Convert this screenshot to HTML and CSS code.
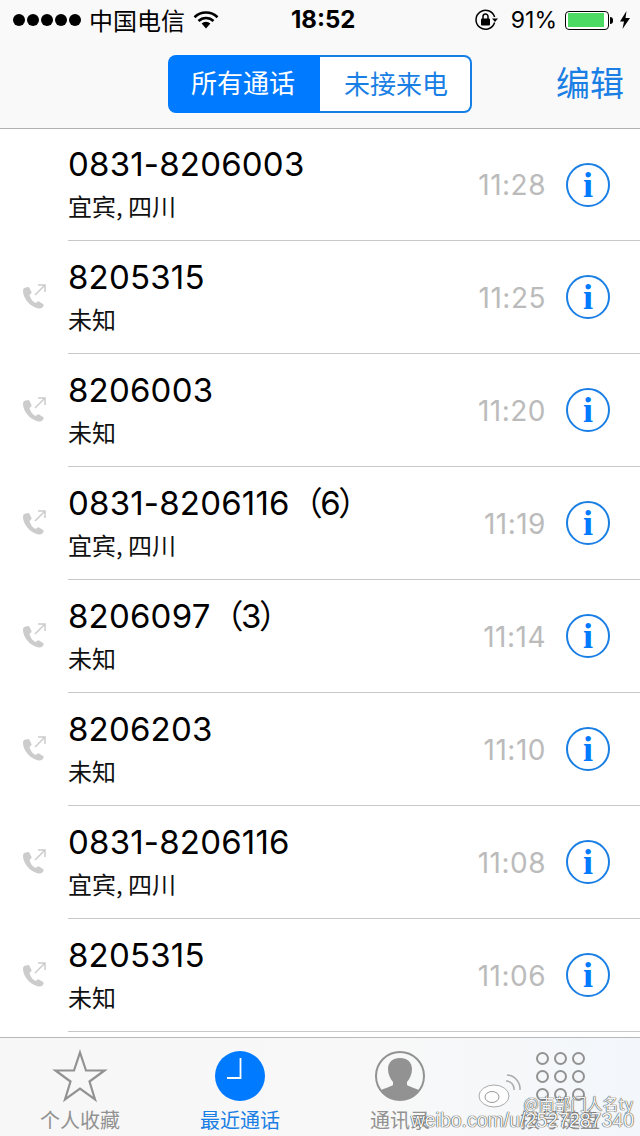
FILE: index.html
```html
<!DOCTYPE html>
<html lang="zh">
<head>
<meta charset="utf-8">
<title>最近通话</title>
<link rel="stylesheet" href="styles.css">
</head>
<body>
<div class="phone">
  <header class="top">
    <div class="status">
      <div class="status-left">
        <span class="dots"><i></i><i></i><i></i><i></i><i></i></span>
        <span class="carrier">中国电信</span>
        <svg class="wifi" width="26" height="20" viewBox="0 0 26 20"><path d="M1.500 7.200A16.500 16.500 0 0 1 24.500 7.200" fill="none" stroke="#000" stroke-width="2.600"/><path d="M5.500 11A10.800 10.800 0 0 1 20.500 11" fill="none" stroke="#000" stroke-width="2.600"/><path d="M13 18.500L8.600 13.600A6.400 6.400 0 0 1 17.400 13.600Z" fill="#000"/></svg>
      </div>
      <div class="clock">18:52</div>
      <div class="status-right">
        <svg class="lock" width="24" height="22" viewBox="0 0 24 22"><path d="M19.600 13.500A9.500 9.500 0 1 1 19.600 8" fill="none" stroke="#000" stroke-width="1.500"/><path d="M17 9.500h6l-3 3.500z" fill="#000"/><rect x="6" y="9.500" width="9" height="7" rx="1" fill="#000"/><path d="M8 10V7.500a2.500 2.500 0 0 1 5 0V10" fill="none" stroke="#000" stroke-width="1.500"/></svg>
        <span class="pct">91%</span>
        <span class="battery"><span class="level"></span></span>
        <span class="nub"></span>
        <svg class="bolt" width="12" height="20" viewBox="0 0 12 20"><path d="M7.500 1L1 11.500h4L3.500 19 11 8H6.500z" fill="#000"/></svg>
      </div>
    </div>
    <div class="nav">
      <div class="segments">
        <span class="seg seg-on">所有通话</span>
        <span class="seg seg-off">未接来电</span>
      </div>
      <span class="edit">编辑</span>
    </div>
  </header>

  <main class="list">
    <div class="row row-first">
      <span class="call"></span>
      <div class="body"><div class="main"><div class="num">0831-8206003</div><div class="place">宜宾, 四川</div></div><span class="time">11:28</span><span class="info">i</span></div>
    </div>
    <div class="row">
      <span class="call"><svg width="26" height="28" viewBox="0 0 26 28"><use href="#out"/></svg></span>
      <div class="body"><div class="main"><div class="num">8205315</div><div class="place">未知</div></div><span class="time">11:25</span><span class="info">i</span></div>
    </div>
    <div class="row">
      <span class="call"><svg width="26" height="28" viewBox="0 0 26 28"><use href="#out"/></svg></span>
      <div class="body"><div class="main"><div class="num">8206003</div><div class="place">未知</div></div><span class="time">11:20</span><span class="info">i</span></div>
    </div>
    <div class="row">
      <span class="call"><svg width="26" height="28" viewBox="0 0 26 28"><use href="#out"/></svg></span>
      <div class="body"><div class="main"><div class="num">0831-8206116<span class="cnt">（6）</span></div><div class="place">宜宾, 四川</div></div><span class="time">11:19</span><span class="info">i</span></div>
    </div>
    <div class="row">
      <span class="call"><svg width="26" height="28" viewBox="0 0 26 28"><use href="#out"/></svg></span>
      <div class="body"><div class="main"><div class="num">8206097<span class="cnt">（3）</span></div><div class="place">未知</div></div><span class="time">11:14</span><span class="info">i</span></div>
    </div>
    <div class="row">
      <span class="call"><svg width="26" height="28" viewBox="0 0 26 28"><use href="#out"/></svg></span>
      <div class="body"><div class="main"><div class="num">8206203</div><div class="place">未知</div></div><span class="time">11:10</span><span class="info">i</span></div>
    </div>
    <div class="row">
      <span class="call"><svg width="26" height="28" viewBox="0 0 26 28"><use href="#out"/></svg></span>
      <div class="body"><div class="main"><div class="num">0831-8206116</div><div class="place">宜宾, 四川</div></div><span class="time">11:08</span><span class="info">i</span></div>
    </div>
    <div class="row">
      <span class="call"><svg width="26" height="28" viewBox="0 0 26 28"><use href="#out"/></svg></span>
      <div class="body"><div class="main"><div class="num">8205315</div><div class="place">未知</div></div><span class="time">11:06</span><span class="info">i</span></div>
    </div>
  </main>

  <nav class="tabs">
    <div class="tab">
      <svg class="tab-icon" width="56" height="54" viewBox="0 0 56 54"><path d="M28 3.500L34 21.500H52.500L37.500 32.500L43 50.500L28 39.500L13 50.500L18.500 32.500L3.500 21.500H22Z" fill="none" stroke="#929292" stroke-width="2.200"/></svg>
      <span class="tab-label">个人收藏</span>
    </div>
    <div class="tab tab-on">
      <svg class="tab-icon" width="56" height="54" viewBox="0 0 56 54"><circle cx="28" cy="27" r="25" fill="#007aff"/><path d="M28.500 9V29H15" fill="none" stroke="#fff" stroke-width="1.800"/></svg>
      <span class="tab-label">最近通话</span>
    </div>
    <div class="tab">
      <svg class="tab-icon" width="56" height="54" viewBox="0 0 56 54"><defs><clipPath id="disc"><circle cx="28" cy="27" r="24"/></clipPath></defs><g clip-path="url(#disc)" fill="#929292"><path d="M28 9c7.500 0 12 4.500 12 11 0 5-2 9.500-5 13v3c2 2 14 4 17 9v10H4V45c3-5 15-7 17-9v-3c-3-3.500-5-8-5-13 0-6.500 4.500-11 12-11z"/></g><circle cx="28" cy="27" r="24" fill="none" stroke="#929292" stroke-width="2"/></svg>
      <span class="tab-label">通讯录</span>
    </div>
    <div class="tab">
      <div class="keypad"><i></i><i></i><i></i><i></i><i></i><i></i><i></i><i></i><i></i></div>
      <span class="tab-label">拨号键盘</span>
    </div>
  </nav>

  <div class="mark" aria-hidden="true">
    <svg class="mark-logo" width="46" height="38" viewBox="0 0 46 38"><ellipse cx="17" cy="24" rx="15" ry="11" fill="#fff" fill-opacity=".75" stroke="#aaa" stroke-width="1"/><ellipse cx="15" cy="25" rx="7" ry="5.500" fill="none" stroke="#999" stroke-width="1"/><path d="M29 9a8 8 0 0 1 8 9M30 3a14 14 0 0 1 13 15" fill="none" stroke="#aaa" stroke-width="1.500"/></svg>
    <span class="mark-name">@南部门人名ty</span>
    <span class="mark-url">weibo.com/u/2527287340</span>
  </div>
</div>

<svg class="sprites" width="0" height="0">
  <symbol id="out" viewBox="0 0 26 28">
    <path d="M3 5l4-1q1 0 1.500 1l2 4q.5 1-1 2l-1 1q1 5 6 8l1.500-1q1-1 2-.5l4 2.500q1 .7.5 2q-1.500 3-5 2.500C9 24 2 15 2 8q0-2 1-3z" fill="#ccc"/>
    <path d="M14 12L24 2M17 2h7v7" fill="none" stroke="#ccc" stroke-width="1.500"/>
  </symbol>
</svg>
</body>
</html>
```

FILE: styles.css
```css
* { box-sizing: border-box; }
html, body { margin: 0; padding: 0; }
body { width: 640px; height: 1136px; overflow: hidden; background: #fff; font-family: "Liberation Sans", "Noto Sans CJK SC", sans-serif; }
.phone { position: relative; width: 640px; height: 1136px; display: flex; flex-direction: column; overflow: hidden; }
.sprites { position: absolute; }

.top { height: 129px; flex: none; background: #f9f9f9; border-bottom: 1px solid #b2b2b2; }
.status { height: 40px; display: flex; align-items: center; padding: 0 9px 0 13px; color: #000; }
.status-left { width: 278px; flex: none; display: flex; align-items: center; }
.dots { display: flex; gap: 2px; margin-right: 8px; }
.dots i { width: 12px; height: 12px; border-radius: 50%; background: #000; }
.carrier { font: 24px/26px "Noto Sans CJK SC", sans-serif; }
.wifi { margin-left: 8px; }
.clock { font: 700 24px/26px "Inter", "Liberation Sans", sans-serif; }
.status-right { margin-left: auto; display: flex; align-items: center; }
.lock { margin-right: 12px; }
.pct { font: 23px/26px "Inter", "Liberation Sans", sans-serif; margin-right: 8px; }
.battery { width: 44px; height: 19px; border: 1.500px solid #000; border-radius: 4px; padding: 1.500px; background: #fff; }
.level { display: block; width: 36px; height: 100%; background: #4cd964; }
.nub { width: 3px; height: 7px; background: #000; border-radius: 0 3px 3px 0; margin-left: 1px; }
.bolt { margin-left: 6px; }

.nav { height: 88px; display: flex; align-items: flex-start; }
.segments { margin: 15px 0 0 168px; display: flex; width: 304px; height: 58px; }
.seg { display: flex; align-items: center; justify-content: center; padding-bottom: 4px; font: 26px/30px "Noto Sans CJK SC", sans-serif; }
.seg-on { width: 152px; flex: none; background: #007aff; color: #fff; border-radius: 8px 0 0 8px; padding-right: 2px; }
.seg-off { flex: 1; color: #1a7fe4; background: #fff; border: 2px solid #157fe6; border-left: 0; border-radius: 0 8px 8px 0; padding: 0 0 2px 2px; }
.edit { margin: 22px 0 0 84px; font: 34px/40px "Noto Sans CJK SC", sans-serif; color: #1a7fe4; }

.list { flex: 1; overflow: hidden; min-height: 0; }
.row { height: 113px; display: flex; }
.row-first { height: 112px; }
.call { width: 68px; flex: none; display: flex; align-items: center; padding: 0 0 2px 21px; }
.call svg { display: block; }
.body { flex: 1; display: flex; align-items: center; border-bottom: 1px solid #c8c7cc; padding-right: 30px; }
.main { flex: 1; min-width: 0; display: flex; flex-direction: column; padding-bottom: 4px; }
.row-first .main { padding-bottom: 6px; }
.num { font: 33px/40px "Inter", "Liberation Sans", "Noto Sans CJK SC", sans-serif; color: #000; white-space: nowrap; letter-spacing: .2px; }
.cnt { letter-spacing: -2.500px; }
.place { font: 24px/28px "Noto Sans CJK SC", sans-serif; color: #111; margin-top: 8px; }
.time { font: 28px/34px "Inter", "Liberation Sans", sans-serif; color: #bbb; margin-right: 20px; padding-top: 2px; letter-spacing: .5px; }
.row-first .time { padding-top: 0; }
.info { width: 44px; height: 44px; flex: none; border: 2.500px solid #1a7fe4; border-radius: 50%; display: flex; align-items: center; justify-content: center; font: 700 36px/38px "Liberation Serif", serif; color: #007aff; }

.tabs { flex: none; height: 99px; background: linear-gradient(90deg, #f7f7f7, #f8f8f8 60%, #f3f7fb); border-top: 1px solid #b8b8b8; display: grid; grid-template-columns: repeat(4, 160px); }
.tab { display: flex; flex-direction: column; align-items: center; padding-top: 11px; color: #929292; }
.tab-icon { display: block; flex: none; }
.tab-on { color: #1a7fe4; }
.tab-label { font: 20px/24px "Noto Sans CJK SC", sans-serif; margin-top: 5px; }
.keypad { width: 48px; height: 54px; flex: none; display: grid; grid-template-columns: repeat(3, 13px); grid-auto-rows: 13px; gap: 5px; justify-content: center; padding-top: 3px; }
.keypad i { width: 13px; height: 13px; border: 2px solid #929292; border-radius: 50%; }

.mark { position: absolute; right: 0; bottom: 0; width: 220px; height: 96px; pointer-events: none; color: #f4f4f4; text-shadow: 0 0 1px #222, 0 0 1px #444; }
.mark-logo { position: absolute; left: 57px; top: 32px; }
.mark-name { position: absolute; right: 7px; top: 52px; font: 16px/22px "Noto Sans CJK SC", sans-serif; white-space: nowrap; }
.mark-url { position: absolute; right: 6px; top: 68px; font: 19.500px/24px "Liberation Sans", sans-serif; white-space: nowrap; }
```
